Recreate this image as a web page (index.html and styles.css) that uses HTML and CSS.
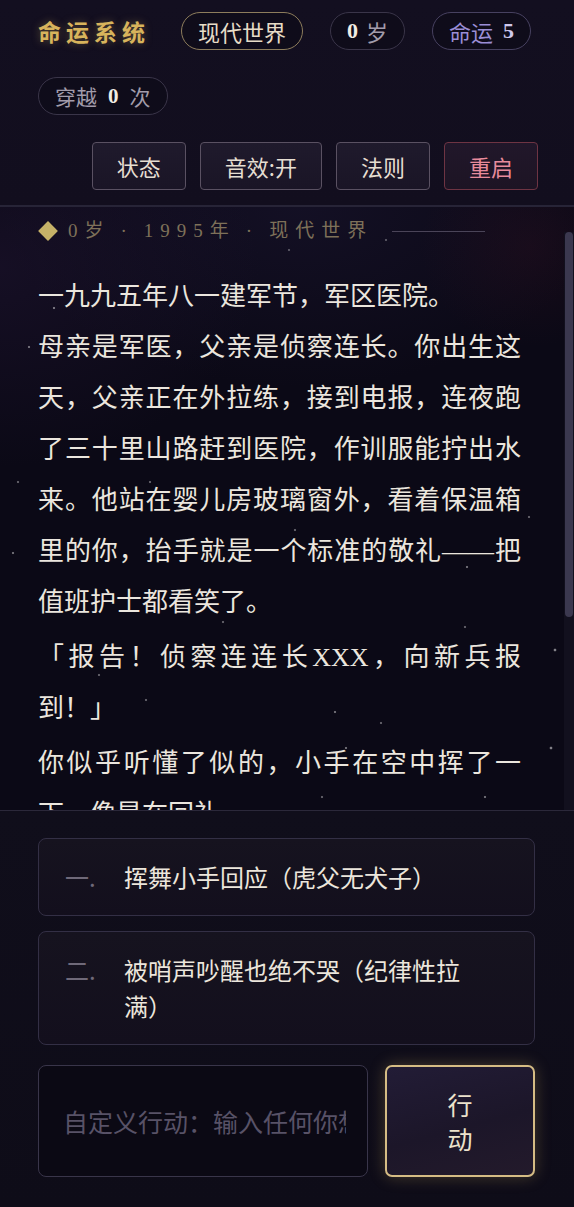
FILE: index.html
```html
<!DOCTYPE html>
<html lang="zh-CN">
<head>
<meta charset="utf-8">
<title>命运系统</title>
<link rel="stylesheet" href="styles.css">
</head>
<body>
<div class="app">
  <header class="topbar">
    <div class="status-row">
      <h1 class="brand">命运系统</h1>
      <span class="pill pill-world">现代世界</span>
      <span class="pill pill-age"><b class="num">0</b> <span>岁</span></span>
      <span class="pill pill-fate"><span>命运</span> <b class="num">5</b></span>
      <span class="pill pill-travel"><span>穿越</span> <b class="num">0</b> <span>次</span></span>
    </div>
    <nav class="actions">
      <button class="btn">状态</button>
      <button class="btn">音效:开</button>
      <button class="btn">法则</button>
      <button class="btn btn-danger">重启</button>
    </nav>
  </header>

  <section class="story-wrap">
    <main class="story">
      <div class="meta">
        <span class="diamond"></span>
        <span>0岁</span>
        <span class="dot">·</span>
        <span>1995年</span>
        <span class="dot">·</span>
        <span>现代世界</span>
        <span class="rule"></span>
      </div>
      <div class="text">
        <p>一九九五年八一建军节，军区医院。<br>母亲是军医，父亲是侦察连长。你出生这天，父亲正在外拉练，接到电报，连夜跑了三十里山路赶到医院，作训服能拧出水来。他站在婴儿房玻璃窗外，看着保温箱里的你，抬手就是一个标准的敬礼——把值班护士都看笑了。</p>
        <p>「报告！侦察连连长XXX，向新兵报到！」</p>
        <p>你似乎听懂了似的，小手在空中挥了一下，像是在回礼。</p>
      </div>
    </main>
    <div class="scrollbar" aria-hidden="true"><div class="thumb"></div></div>
  </section>

  <footer class="panel">
    <div class="choices">
      <button class="choice"><span class="choice-num">一.</span><span class="choice-text">挥舞小手回应（虎父无犬子）</span></button>
      <button class="choice"><span class="choice-num">二.</span><span class="choice-text">被哨声吵醒也绝不哭（纪律性拉满）</span></button>
    </div>
    <div class="compose">
      <input class="custom" type="text" placeholder="自定义行动：输入任何你想做的事">
      <button class="go"><span class="go-label">行动</span></button>
    </div>
  </footer>
</div>
</body>
</html>
```

FILE: styles.css
```css
html, body {
  margin: 0;
  height: 100%;
  background: #0c0a16;
}

body {
  font-family: "Liberation Serif", "Noto Sans CJK SC", serif;
  color: #ebe6de;
}

.app {
  height: 100vh;
  display: flex;
  flex-direction: column;
  background: #0c0a16;
}

/* ---------- header ---------- */
.topbar {
  flex: 0 0 auto;
  padding: 12px 36px 15px 38px;
  background: linear-gradient(180deg, #130f20 0%, #120e1e 100%);
  border-bottom: 2px solid #272437;
}

.status-row {
  display: flex;
  flex-wrap: wrap;
  align-items: center;
  column-gap: 27px;
  row-gap: 27px;
}

.brand {
  margin: 0 4px 0 0;
  font-family: "Noto Sans CJK SC", serif;
  font-size: 23px;
  font-weight: 700;
  letter-spacing: 5px;
  line-height: 38px;
  color: #d8b45c;
  text-shadow: 0 0 8px rgba(216, 180, 92, 0.35);
}

.pill {
  box-sizing: border-box;
  height: 38px;
  display: inline-flex;
  align-items: center;
  gap: 8px;
  padding: 0 16px;
  border: 1px solid #3a3549;
  border-radius: 19px;
  font-size: 22px;
  color: #a29cab;
  background: rgba(10, 8, 18, 0.35);
}

.pill .num {
  font-family: "Liberation Serif", serif;
  font-weight: 700;
  color: #f1ede4;
}

.pill-world {
  border-color: #8d7d5c;
  color: #e7dcc7;
}

.pill-fate {
  gap: 10px;
  border-color: #474160;
  color: #9b8ed6;
}

.pill-fate .num {
  color: #cfc8ec;
}

.pill-travel {
  gap: 11px;
  font-size: 21px;
}

.actions {
  display: flex;
  justify-content: flex-end;
  gap: 14px;
  margin-top: 27px;
}

.btn {
  box-sizing: border-box;
  height: 48px;
  padding: 0 24px;
  border: 1px solid #5a5162;
  border-radius: 4px;
  background: linear-gradient(180deg, #1f1a2c 0%, #1a1526 100%);
  font-family: "Noto Sans CJK SC", serif;
  font-size: 22px;
  color: #e6ded2;
}

.btn-danger {
  border-color: #6e3443;
  color: #e88b9c;
  background: linear-gradient(180deg, #21172a 0%, #1d1424 100%);
}

/* ---------- story ---------- */
.story-wrap {
  flex: 1 1 auto;
  min-height: 0;
  display: flex;
  background:
    radial-gradient(circle, rgba(255,255,255,.75) 0, rgba(255,255,255,0) 1.6px) 52px 99px / 4px 4px no-repeat,
    radial-gradient(circle, rgba(255,255,255,.7) 0, rgba(255,255,255,0) 1.6px) 27px 138px / 4px 4px no-repeat,
    radial-gradient(circle, rgba(255,255,255,.5) 0, rgba(255,255,255,0) 1.6px) 287px 41px / 4px 4px no-repeat,
    radial-gradient(circle, rgba(255,255,255,.5) 0, rgba(255,255,255,0) 1.6px) 384px 31px / 4px 4px no-repeat,
    radial-gradient(circle, rgba(255,255,255,.6) 0, rgba(255,255,255,0) 1.6px) 16px 273px / 4px 4px no-repeat,
    radial-gradient(circle, rgba(255,255,255,.6) 0, rgba(255,255,255,0) 1.6px) 148px 273px / 4px 4px no-repeat,
    radial-gradient(circle, rgba(255,255,255,.6) 0, rgba(255,255,255,0) 1.6px) 293px 321px / 4px 4px no-repeat,
    radial-gradient(circle, rgba(255,255,255,.7) 0, rgba(255,255,255,0) 1.6px) 11px 344px / 4px 4px no-repeat,
    radial-gradient(circle, rgba(255,255,255,.7) 0, rgba(255,255,255,0) 1.6px) 465px 358px / 4px 4px no-repeat,
    radial-gradient(circle, rgba(255,255,255,.6) 0, rgba(255,255,255,0) 1.6px) 527px 308px / 4px 4px no-repeat,
    radial-gradient(circle, rgba(255,255,255,.6) 0, rgba(255,255,255,0) 1.6px) 463px 418px / 4px 4px no-repeat,
    radial-gradient(circle, rgba(255,255,255,.6) 0, rgba(255,255,255,0) 1.6px) 221px 413px / 4px 4px no-repeat,
    radial-gradient(circle, rgba(255,255,255,.8) 0, rgba(255,255,255,0) 1.8px) 553px 441px / 4px 4px no-repeat,
    radial-gradient(circle, rgba(255,255,255,.6) 0, rgba(255,255,255,0) 1.6px) 97px 466px / 4px 4px no-repeat,
    radial-gradient(circle, rgba(255,255,255,.6) 0, rgba(255,255,255,0) 1.6px) 144px 491px / 4px 4px no-repeat,
    radial-gradient(circle, rgba(255,255,255,.7) 0, rgba(255,255,255,0) 1.6px) 333px 503px / 4px 4px no-repeat,
    radial-gradient(circle, rgba(255,255,255,.6) 0, rgba(255,255,255,0) 1.6px) 379px 514px / 4px 4px no-repeat,
    radial-gradient(circle, rgba(255,255,255,.8) 0, rgba(255,255,255,0) 1.8px) 549px 539px / 4px 4px no-repeat,
    radial-gradient(circle, rgba(255,255,255,.7) 0, rgba(255,255,255,0) 1.6px) 344px 539px / 4px 4px no-repeat,
    radial-gradient(circle, rgba(255,255,255,.6) 0, rgba(255,255,255,0) 1.6px) 320px 588px / 4px 4px no-repeat,
    radial-gradient(circle, rgba(255,255,255,.7) 0, rgba(255,255,255,0) 1.6px) 483px 588px / 4px 4px no-repeat,
    radial-gradient(ellipse 110px 100px at 530px 40px, rgba(80, 22, 40, 0.18), rgba(80, 22, 40, 0) 100%),
    radial-gradient(ellipse 260px 200px at 0px 60px, rgba(38, 24, 58, 0.4), rgba(38, 24, 58, 0) 100%),
    radial-gradient(ellipse 300px 180px at 300px 0px, rgba(30, 24, 54, 0.45), rgba(30, 24, 54, 0) 100%),
    #0b0916;
}

.story {
  flex: 1 1 auto;
  min-width: 0;
  overflow: hidden;
  padding: 14px 0 0 38px;
}

.scrollbar {
  flex: 0 0 10px;
  box-sizing: border-box;
  padding-top: 25px;
  background: linear-gradient(180deg, rgba(0,0,0,0) 0, rgba(0,0,0,0) 25px, #12101e 25px);
}

.thumb {
  height: 385px;
  margin: 0 1px;
  border-radius: 4px;
  background: #3b384f;
}

.meta {
  display: flex;
  align-items: center;
  gap: 10px;
  height: 20px;
  margin-bottom: 30px;
  font-size: 19px;
  line-height: 20px;
  letter-spacing: 7px;
  color: #7e7159;
}

.meta .diamond {
  width: 14px;
  height: 14px;
  margin: 0 3px 0 3px;
  background: #c6b268;
  transform: rotate(45deg);
  flex: 0 0 auto;
}

.meta .rule {
  width: 93px;
  height: 1px;
  margin-left: 9px;
  background: #4a4458;
}

.text {
  width: 483px;
  font-family: "Liberation Serif", "Noto Sans CJK SC", serif;
  font-size: 26px;
  line-height: 51px;
  text-align: justify;
  color: #ebe6de;
}

.text p {
  margin: 0 0 4px 0;
}

/* ---------- bottom panel ---------- */
.panel {
  flex: 0 0 auto;
  padding: 27px 39px 30px 38px;
  border-top: 1px solid #2b283a;
  background: linear-gradient(180deg, #100e1b 0%, #0e0c18 100%);
}

.choices {
  display: flex;
  flex-direction: column;
  gap: 15px;
}

.choice {
  display: flex;
  align-items: flex-start;
  width: 100%;
  box-sizing: border-box;
  padding: 20px 40px 20px 26px;
  border: 1px solid #332f45;
  border-radius: 8px;
  background: linear-gradient(180deg, #16131f 0%, #130f1d 100%);
  font-family: "Noto Sans CJK SC", serif;
  font-size: 24px;
  line-height: 36px;
  text-align: left;
  color: #ece6dc;
}

.choice-num {
  flex: 0 0 59px;
  color: #6f6979;
}

.choice-text {
  flex: 1 1 auto;
}

.compose {
  display: flex;
  gap: 17px;
  height: 112px;
  margin-top: 20px;
}

.custom {
  flex: 0 0 330px;
  box-sizing: border-box;
  height: 100%;
  padding: 0 21px 0 24px;
  border: 1px solid #39354a;
  border-radius: 8px;
  background: #0b0914;
  font-family: "Noto Sans CJK SC", serif;
  font-size: 25px;
  color: #ebe6de;
  outline: none;
}

.custom::placeholder {
  color: #585267;
}

.go {
  flex: 1 1 auto;
  box-sizing: border-box;
  height: 100%;
  border: 2px solid #d5bc84;
  border-radius: 7px;
  background: linear-gradient(165deg, #221c36 0%, #1c1629 55%, #231a2b 100%);
  box-shadow: 0 0 16px rgba(214, 178, 100, 0.28);
  font-family: "Noto Sans CJK SC", serif;
  font-size: 25px;
  line-height: 34px;
  color: #ece2cc;
}

.go-label {
  display: block;
  width: 1em;
  margin: 0 auto;
}
```
